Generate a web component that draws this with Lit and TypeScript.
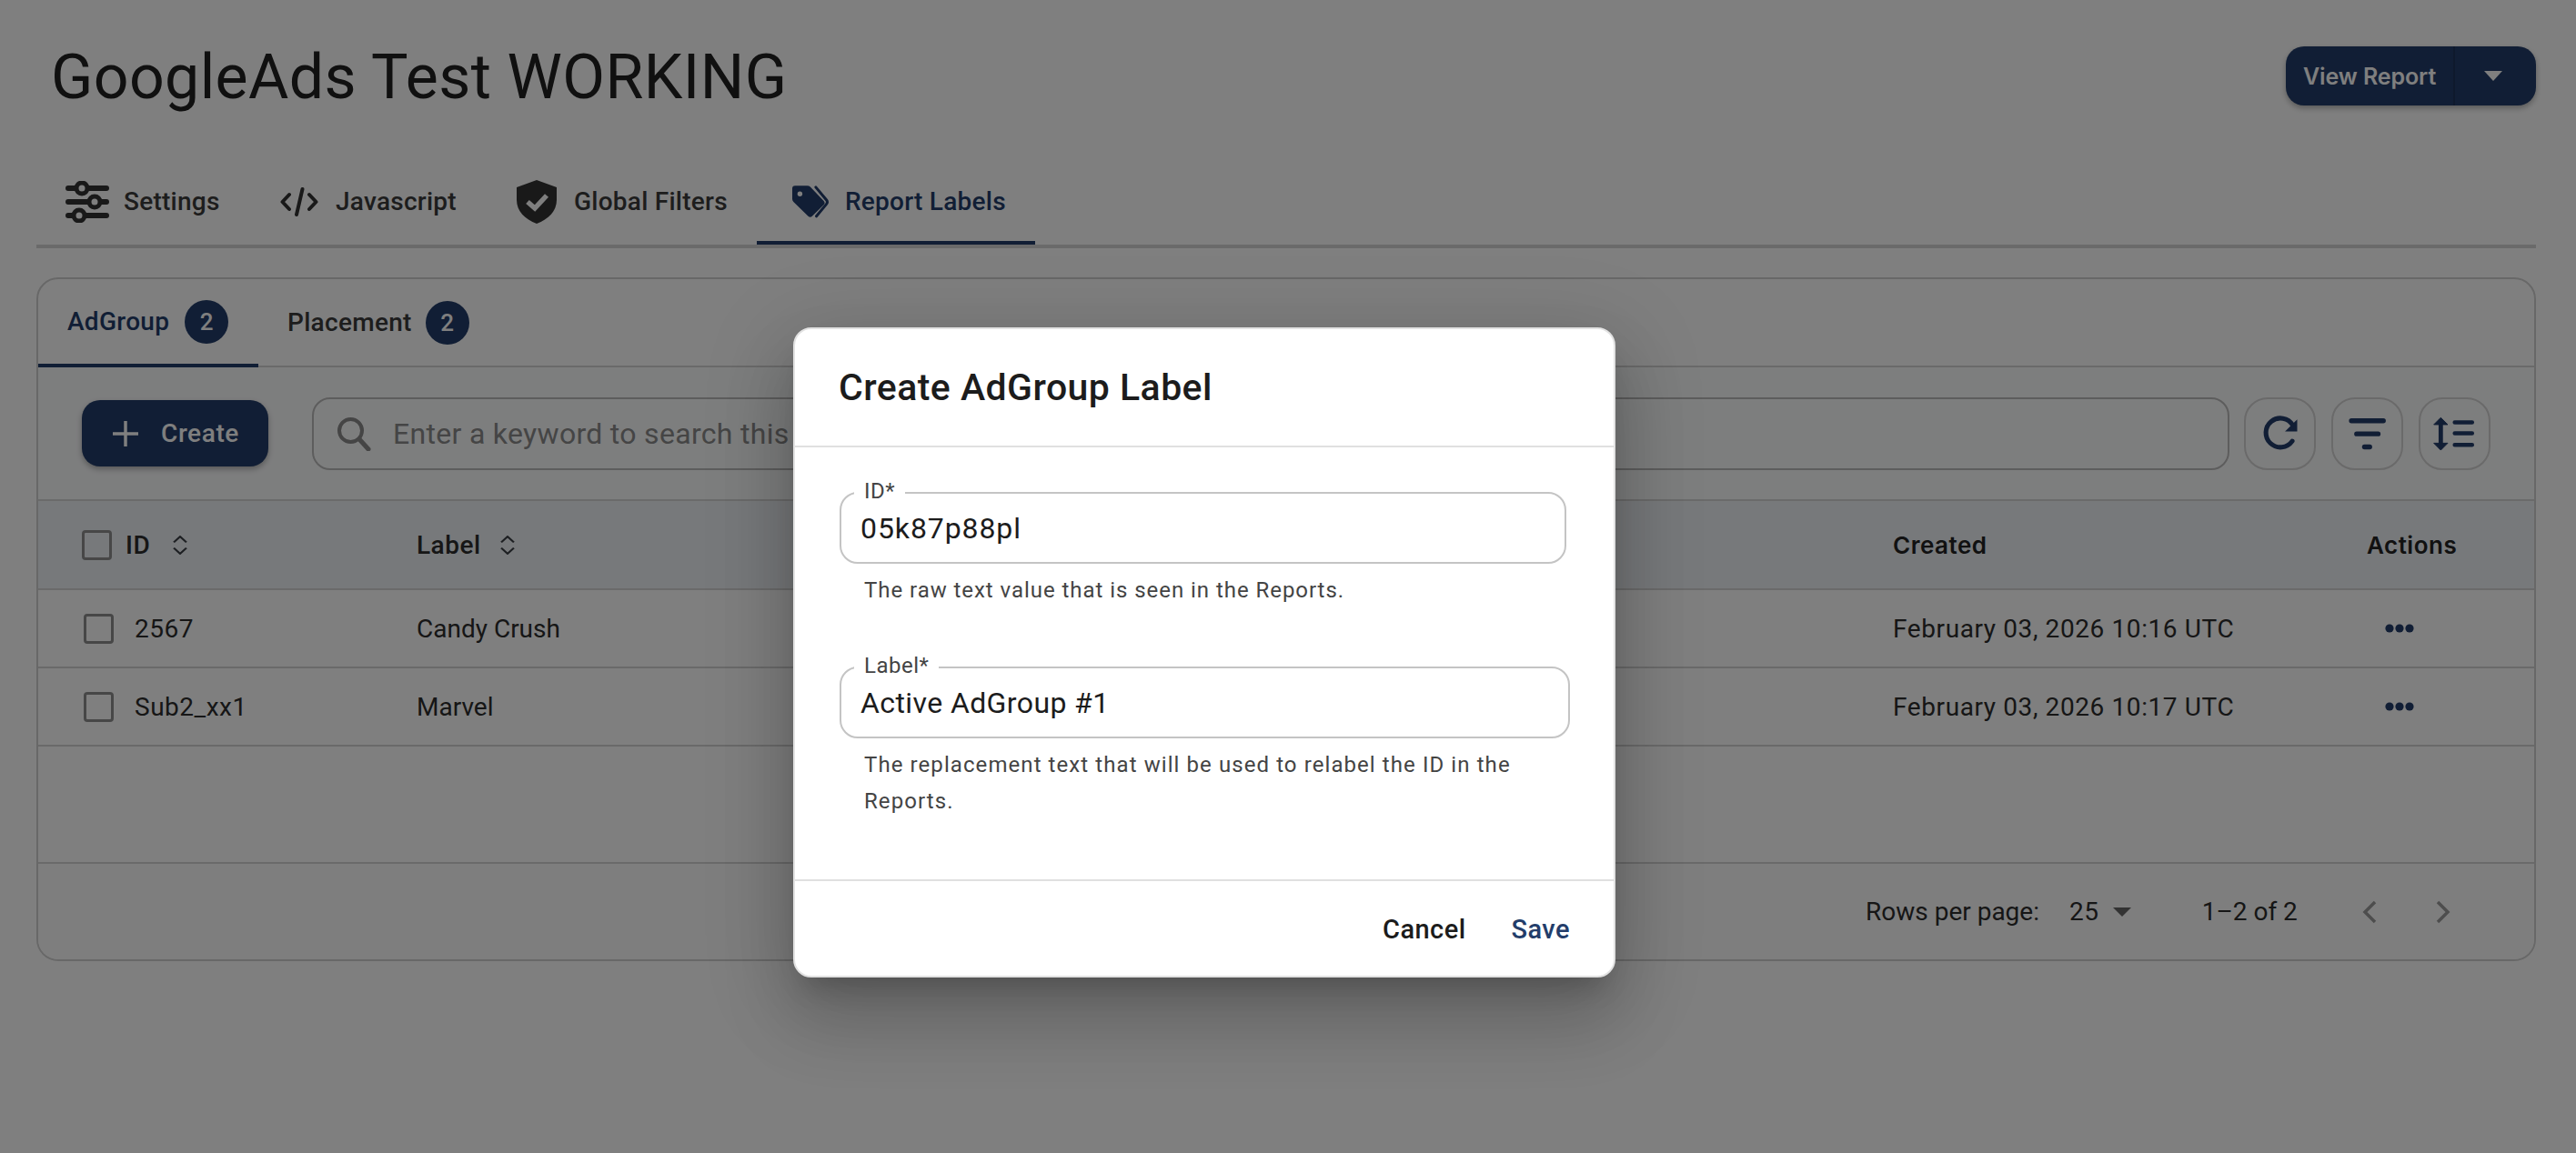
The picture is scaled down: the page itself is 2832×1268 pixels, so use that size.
import { LitElement, html, css } from "lit";
import { customElement } from "lit/decorators.js";

const sortIcon = html`<svg class="sort" viewBox="2 1 12 20" preserveAspectRatio="none"><path d="M2.800 8 8 2l5.200 6M2.800 14 8 20l5.200-6" fill="none" stroke="#3a3f45" stroke-width="1.700"/></svg>`;
const dots = html`<svg class="dots" viewBox="0 0 32 10"><circle cx="5" cy="5" r="4.600"/><circle cx="16" cy="5" r="4.600"/><circle cx="27" cy="5" r="4.600"/></svg>`;

@customElement("app-root")
export class AppRoot extends LitElement {
  static styles = css`
    :host { display: block; width: 2832px; height: 1268px; position: relative; overflow: hidden; background: #fff; font-family: Roboto, "Noto Sans", sans-serif; color: #2c2c2c; }
    * { box-sizing: border-box; }
    .page { width: 2832px; height: 1268px; padding: 0 44px 0 40px; display: flex; flex-direction: column; }
    .head { height: 190px; display: flex; justify-content: space-between; align-items: flex-start; padding-left: 16px; }
    h1 { margin: 41px 0 0; font-size: 68px; line-height: 88px; font-weight: 400; color: #202020; letter-spacing: 0.4px; white-space: nowrap; }
    .split { margin-top: 51px; width: 275px; height: 65px; border-radius: 20px; background: #233d6a; display: flex; color: #fff; box-shadow: 0 3px 6px rgba(0,0,0,.3); font-family: Inter, sans-serif; font-weight: 600; font-size: 25px; letter-spacing: -.1px; }
    .split .l { width: 186px; border-right: 2px solid #1c3358; padding-left: 19px; display: flex; align-items: center; white-space: nowrap; }
    .split .r { flex: 1; display: flex; align-items: center; justify-content: center; padding-right: 6px; }
    .tri { width: 0; height: 0; border-left: 10px solid transparent; border-right: 10px solid transparent; border-top: 11px solid #fff; }
    .tabs { height: 83px; border-bottom: 4px solid #d4d4d4; display: flex; }
    .tab { height: 79px; padding-bottom: 16px; display: flex; align-items: center; font-size: 28px; font-weight: 500; color: #3a3a3a; white-space: nowrap; letter-spacing: .25px; }
    .tab svg { flex: none; }
    .t1 { width: 261px; padding-left: 32px; gap: 16px; }
    .t2 { width: 261px; padding-left: 7px; gap: 19px; }
    .t3 { width: 270px; padding-left: 5px; gap: 18px; }
    .t4 { width: 306px; padding-left: 38px; padding-bottom: 12px; gap: 17px; color: #233d6a; border-bottom: 4px solid #233d6a; }
    .card { margin-top: 32px; height: 752px; border: 2px solid #d0d0d0; border-radius: 24px; overflow: hidden; display: flex; flex-direction: column; }
    .subtabs { height: 97px; border-bottom: 2px solid #d4d4d4; display: flex; flex: none; }
    .st { height: 97px; display: flex; align-items: center; font-size: 28px; font-weight: 500; color: #3a3a3a; gap: 17px; white-space: nowrap; letter-spacing: .3px; }
    .st.a { width: 242px; padding-left: 32px; color: #233d6a; border-bottom: 4px solid #233d6a; }
    .st.b { padding-left: 32px; gap: 15px; padding-bottom: 2px; }
    .badge { width: 48px; height: 48px; border-radius: 50%; background: #233d6a; color: #fff; display: flex; align-items: center; justify-content: center; font-size: 26px; font-weight: 500; }
    .toolbar { height: 147px; flex: none; padding: 33px 0 0 48px; display: flex; background: #fbfcfd; border-bottom: 2px solid #d4d4d4; }
    .create { width: 205px; height: 73px; margin-top: 3px; border-radius: 20px; background: #233d6a; color: #fff; box-shadow: 0 3px 6px rgba(0,0,0,.3); display: flex; align-items: center; padding-left: 33px; gap: 24px; font-size: 28px; font-weight: 500; letter-spacing: .6px; }
    .search { width: 2108px; height: 80px; margin-left: 48px; margin-right: -1px; border: 2px solid #bbb; border-radius: 20px; display: flex; align-items: center; padding-left: 25px; gap: 24px; font-size: 32px; color: #8a8a8a; white-space: nowrap; letter-spacing: .3px; }
    .ib { width: 79px; height: 80px; margin-left: 17px; border: 2px solid #d4d4d4; border-radius: 26px; display: block; }
    .ib svg { display: block; width: 100%; height: 100%; }
    .row { display: flex; align-items: center; flex: none; font-size: 28px; color: #2c2c2c; border-bottom: 2px solid #d4d4d4; height: 86px; }
    .row.h { height: 98px; background: #eef2f6; font-weight: 500; letter-spacing: .5px; }
    .c1 { width: 416px; display: flex; align-items: center; padding-left: 50px; white-space: nowrap; letter-spacing: .5px; }
    .h .c1 { padding-left: 48px; }
    .c2 { width: 1623px; display: flex; align-items: center; white-space: nowrap; }
    .c3 { width: 521px; white-space: nowrap; letter-spacing: .6px; }
    .c4 { display: flex; }
    .cb { width: 33px; height: 33px; border: 3.500px solid #8e8e8e; border-radius: 4px; flex: none; }
    .id { margin-left: 23px; }
    .h .id { margin-left: 15px; }
    .sort { width: 16px; height: 21px; margin-left: 21px; flex: none; }
    .h .c1 .sort { margin-left: 25px; }
    .row.h .hi { font-family: Inter, sans-serif; font-weight: 600; font-size: 26px; color: #222; letter-spacing: .5px; }
    .dots { width: 32px; height: 10px; margin-left: 20px; fill: #233d6a; }
    .empty { height: 129px; flex: none; border-bottom: 2px solid #d4d4d4; }
    .foot { flex: 1; display: flex; align-items: center; font-size: 28px; padding-left: 2009px; white-space: nowrap; color: #2c2c2c; background: #fdfdfd; }
    .sel { margin-left: 33px; letter-spacing: .6px; }
    .foot .tri2 { width: 0; height: 0; margin-left: 15px; border-left: 10px solid transparent; border-right: 10px solid transparent; border-top: 10px solid #666; }
    .range { margin-left: 78px; }
    .chev { width: 18px; height: 26px; flex: none; }
    .chev.p { margin-left: 70px; }
    .chev.n { margin-left: 63px; }
    .backdrop { position: absolute; inset: 0; background: rgba(0,0,0,.5); }
    .modal { position: absolute; left: 872px; top: 360px; width: 904px; height: 715px; border: 2px solid #e2e2e2; border-radius: 20px; background: #fff; display: flex; flex-direction: column; box-shadow: 0 22px 30px -14px rgba(0,0,0,.2), 0 48px 76px 6px rgba(0,0,0,.14), 0 18px 92px 16px rgba(0,0,0,.12); }
    .mh { height: 130px; flex: none; border-bottom: 2px solid #e0e0e0; padding: 0 0 0 48px; display: flex; align-items: center; font-size: 41px; font-weight: 500; color: #1c1c1c; letter-spacing: .45px; }
    .mb { flex: 1; padding: 49px 0 0 49px; display: flex; flex-direction: column; }
    .field { position: relative; height: 79px; border: 2px solid #c4c4c4; border-radius: 20px; display: flex; align-items: center; padding-left: 21px; font-size: 32px; color: #1c1c1c; }
    .f1 { width: 799px; letter-spacing: .9px; }
    .f2 { width: 803px; letter-spacing: .4px; }
    .legend { position: absolute; left: 14px; top: -16px; height: 28px; padding: 0 11px; background: #fff; font-size: 24px; line-height: 26px; color: #444; letter-spacing: .5px; }
    .help { margin: 9px 0 0 27px; width: 770px; font-size: 24px; line-height: 40px; color: #444; letter-spacing: .95px; }
    .h1 { height: 104px; }
    .h2 { letter-spacing: 1.08px; }
    .mf { height: 106px; flex: none; border-top: 2px solid #e0e0e0; display: flex; align-items: center; justify-content: flex-end; padding: 2px 48px 0 0; gap: 50px; font-size: 29px; font-weight: 500; color: #1c1c1c; letter-spacing: .45px; }
    .mf .s { color: #233d6a; }
  `;

  render() {
    return html`
      <div class="page">
        <div class="head">
          <h1>GoogleAds Test WORKING</h1>
          <div class="split"><div class="l">View Report</div><div class="r"><div class="tri"></div></div></div>
        </div>
        <div class="tabs">
          <div class="tab t1">
            <svg width="48" height="46" viewBox="0 0 48 46"><g fill="none" stroke="#333" stroke-width="6" stroke-linecap="round"><path d="M3 8h42M3 23h42M3 38h42"/></g><g fill="#fff" stroke="#333" stroke-width="5"><circle cx="18" cy="8" r="6"/><circle cx="32" cy="23" r="6"/><circle cx="15" cy="38" r="6"/></g></svg>
            Settings</div>
          <div class="tab t2">
            <svg width="42" height="32" viewBox="0 0 42 32"><path d="M10 8 2.500 16 10 24M32 8l7.500 8L32 24M24.500 2 18 30" fill="none" stroke="#333" stroke-width="4" stroke-linecap="round" stroke-linejoin="round"/></svg>
            Javascript</div>
          <div class="tab t3">
            <svg width="46" height="48" viewBox="0 0 46 48"><path d="M23 0 45 8v14c0 12-9 21-22 26C10 43 1 34 1 22V8z" fill="#333"/><path d="M13 24l8 7 13-14" fill="none" stroke="#fff" stroke-width="5.500"/></svg>
            Global Filters</div>
          <div class="tab t4">
            <svg width="42" height="38" viewBox="960 70 125 112"><path d="M972 73h40q6 0 10 4l44 46q6 7 0 13l-38 37q-6 6-13 0l-48-47q-4-4-4-10V82q0-9 9-9z" fill="#233d6a"/><circle cx="988" cy="100" r="8" fill="#fff"/><path d="M1040 78l35 42q5 7 0 13l-33 40" fill="none" stroke="#233d6a" stroke-width="9" stroke-linecap="round"/></svg>
            Report Labels</div>
        </div>
        <div class="card">
          <div class="subtabs">
            <div class="st a">AdGroup <span class="badge">2</span></div>
            <div class="st b">Placement <span class="badge">2</span></div>
          </div>
          <div class="toolbar">
            <div class="create"><svg width="30" height="30" viewBox="0 0 30 30"><path d="M15 1v28M1 15h28" stroke="#fff" stroke-width="3.500"/></svg>Create</div>
            <div class="search"><svg width="38" height="38" viewBox="0 0 38 38" style="flex:none"><circle cx="15.500" cy="15.500" r="12.500" fill="none" stroke="#8a8a8a" stroke-width="4"/><path d="M25 25l10 11" stroke="#8a8a8a" stroke-width="5" stroke-linecap="round"/></svg>Enter a keyword to search this table</div>
            <div class="ib"><svg viewBox="50 22 235 235"><path d="M212 110a50 50 0 1 0-2 55" fill="none" stroke="#233d6a" stroke-width="16" stroke-linecap="round"/><path d="M227 90v42h-42z" fill="#233d6a"/></svg></div>
            <div class="ib"><svg viewBox="338 22 235 235"><path d="M401 95h110M419 140h74M446 185h18" fill="none" stroke="#233d6a" stroke-width="17" stroke-linecap="round"/></svg></div>
            <div class="ib"><svg viewBox="627 22 235 235"><path d="M697 95v90" stroke="#233d6a" stroke-width="15" stroke-linecap="round"/><path d="M673 108l24-24 24 24zM673 172l24 24 24-24z" fill="#233d6a" stroke="#233d6a" stroke-width="3" stroke-linejoin="round"/><path d="M745 100h60M745 138h60M745 178h60" stroke="#233d6a" stroke-width="14" stroke-linecap="round"/></svg></div>
          </div>
          <div class="row h">
            <div class="c1"><span class="cb"></span><span class="id">ID</span>${sortIcon}</div>
            <div class="c2">Label${sortIcon}</div>
            <div class="c3 hi">Created</div>
            <div class="c4 hi">Actions</div>
          </div>
          <div class="row">
            <div class="c1"><span class="cb"></span><span class="id">2567</span></div>
            <div class="c2">Candy Crush</div>
            <div class="c3">February 03, 2026 10:16 UTC</div>
            <div class="c4">${dots}</div>
          </div>
          <div class="row">
            <div class="c1"><span class="cb"></span><span class="id">Sub2_xx1</span></div>
            <div class="c2">Marvel</div>
            <div class="c3">February 03, 2026 10:17 UTC</div>
            <div class="c4">${dots}</div>
          </div>
          <div class="empty"></div>
          <div class="foot">
            <span>Rows per page:</span><span class="sel">25</span><span class="tri2"></span><span class="range">1–2 of 2</span>
            <svg class="chev p" viewBox="0 0 18 26"><path d="M15 2 4 13l11 11" fill="none" stroke="#9a9a9a" stroke-width="3.500"/></svg>
            <svg class="chev n" viewBox="0 0 18 26"><path d="M3 2l11 11L3 24" fill="none" stroke="#9a9a9a" stroke-width="3.500"/></svg>
          </div>
        </div>
      </div>
      <div class="backdrop"></div>
      <div class="modal">
        <div class="mh">Create AdGroup Label</div>
        <div class="mb">
          <div class="field f1"><span class="legend">ID*</span>05k87p88pl</div>
          <div class="help h1">The raw text value that is seen in the Reports.</div>
          <div class="field f2"><span class="legend">Label*</span>Active AdGroup #1</div>
          <div class="help h2">The replacement text that will be used to relabel the ID in the Reports.</div>
        </div>
        <div class="mf"><span>Cancel</span><span class="s">Save</span></div>
      </div>
    `;
  }
}
